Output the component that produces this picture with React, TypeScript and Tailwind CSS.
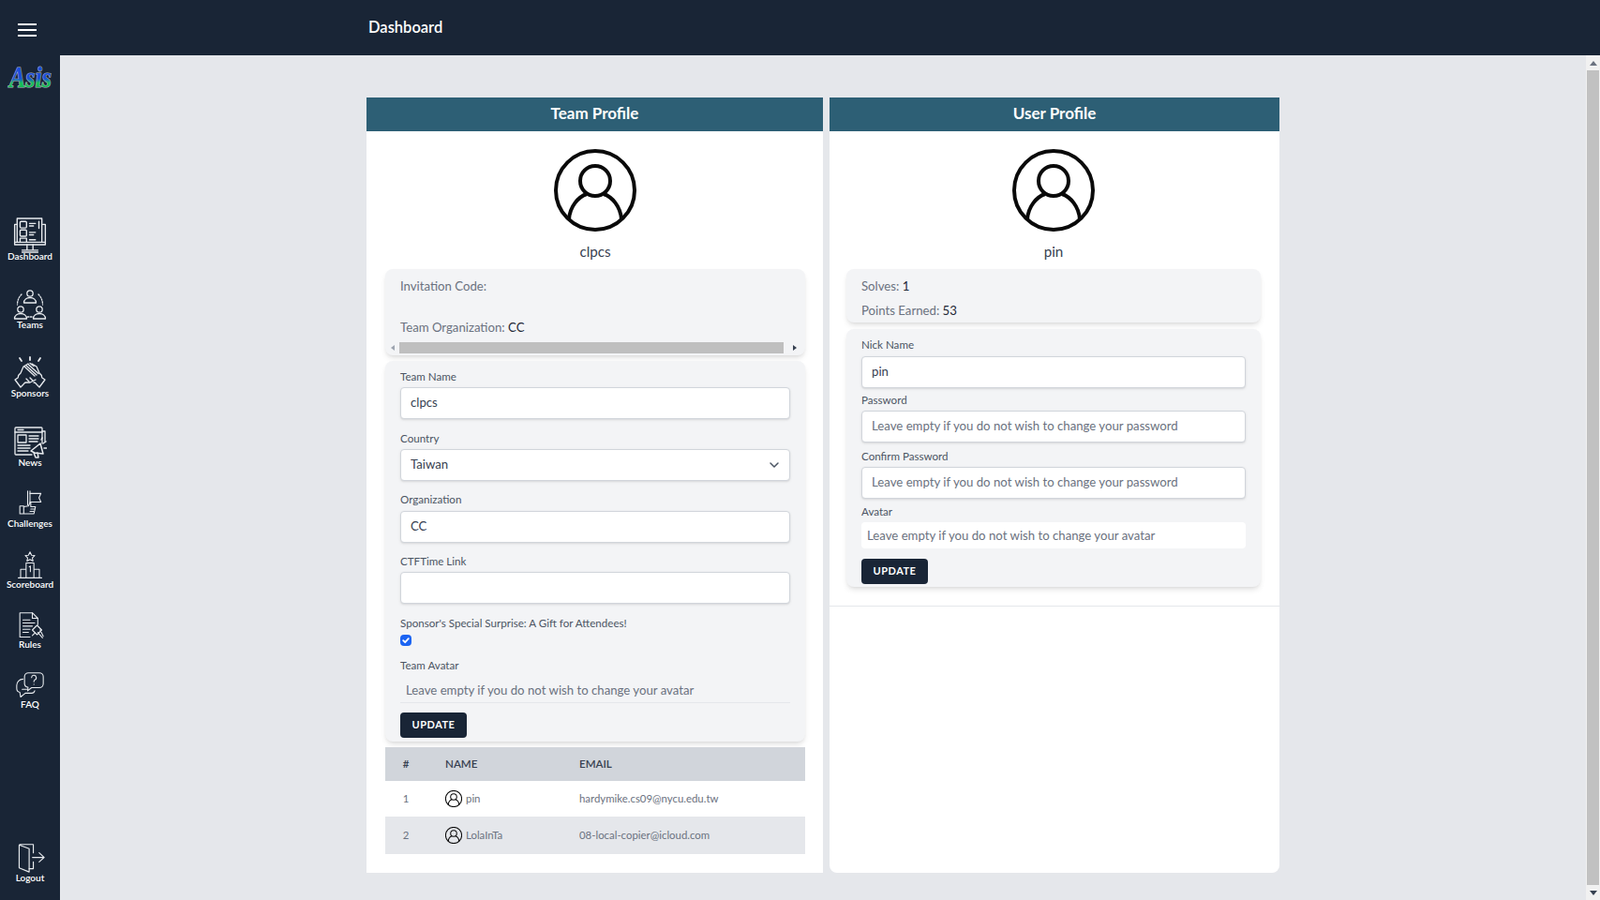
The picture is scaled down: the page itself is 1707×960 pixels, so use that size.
import React from 'react';

const font = "font-['Lato','Noto_Sans',sans-serif]";

function SvgIcon({ children, w = 36, h = 36 }: { children: React.ReactNode; w?: number; h?: number }) {
  return (
    <svg width={w} height={h} viewBox="0 0 36 36" fill="none" stroke="#e8ebef" strokeWidth="1.300" strokeLinecap="round" strokeLinejoin="round">
      {children}
    </svg>
  );
}

const DashboardIcon = () => (
  <SvgIcon w={38} h={38}>
    <path d="M5 7H2.500v20.500h31V7H31" />
    <path d="M2.500 25h31" />
    <path d="M5 25V1h25v24" />
    <rect x="8" y="4" width="6.500" height="6.500" rx="1" />
    <rect x="8" y="12.500" width="6.500" height="6.500" rx="1" />
    <path d="M8 25v-4h6.500v4" />
    <path d="M17.500 6h6M17.500 8.500h4M17.500 15h6M17.500 17.500h4M17.500 22.500h6M27 4v7" />
    <path d="M15 27.500v5M21 27.500v5M10 33h16M10 35h16" />
  </SvgIcon>
);

const TeamsIcon = () => (
  <SvgIcon w={36} h={36}>
    <circle cx="18" cy="6" r="3.200" />
    <path d="M11.500 16c0-3.500 3-5.500 6.500-5.500s6.500 2 6.500 5.500z" />
    <circle cx="8" cy="23" r="3.200" />
    <path d="M1.500 33c0-3.500 3-5.500 6.500-5.500s6.500 2 6.500 5.500z" />
    <circle cx="28" cy="23" r="3.200" />
    <path d="M21.500 33c0-3.500 3-5.500 6.500-5.500s6.500 2 6.500 5.500z" />
    <path d="M9 7c-2.500 2.500-4.500 6-4.500 11M27 7c2.500 2.500 4.500 6 4.500 11M15.500 31h5" strokeDasharray="1.500 1.500" />
  </SvgIcon>
);

const SponsorsIcon = () => (
  <SvgIcon w={38} h={36}>
    <path d="M18 1v3M7 2l2 3M29 2l-2 3" strokeWidth="1.800" />
    <path d="M16 8l-5 3-3 7-2 2c-1 1 0 2-1 3l-3 2 6 8 3-3c1-1 1-2 3-2h4l6-3" />
    <path d="M20 8l5 3 3 7 2 2c1 1 0 2 1 3l3 2-6 8-3-3c-1-1-1-2-3-2" />
    <path d="M12 11l11 10M14 10l11 10M16 8.500l11 10M18 7.500l4 3" />
    <path d="M14 24l3 3M18 23l3 3" />
  </SvgIcon>
);

const NewsIcon = () => (
  <SvgIcon w={36} h={36}>
    <path d="M31 19V3a1 1 0 0 0-1-1H3a1 1 0 0 0-1 1v27a1 1 0 0 0 1 1h17" />
    <path d="M2 7h29M5 4.500h6M34 17V6h-3" />
    <rect x="5" y="10" width="9" height="8" />
    <path d="M17 11h10M17 14h10M17 17h9M5 21h13M5 24h13M5 27h11" />
    <path d="M19 27l10-8 3 11-9 -1zM22 29l2 5h3l-1-5M32 19l3-2M33 24h3M30 15l1-2" strokeWidth="1.500" />
  </SvgIcon>
);

const ChallengesIcon = () => (
  <SvgIcon w={30} h={30}>
    <path d="M15 1v18M18 1v15" />
    <path d="M18 4h14l-2.500 5.500 2.500 5.500H18" />
    <path d="M5 20h5v10H5zM10 21l6-1 2-4h1v5h6l-2 9H10" />
    <path d="M19 24h5M18 27h5" />
  </SvgIcon>
);

const ScoreboardIcon = () => (
  <SvgIcon w={30} h={30}>
    <path d="M18 1l2 4 4 .5-3 3 .8 4-3.800-2-3.800 2 .8-4-3-3 4-.5z" />
    <path d="M13 34V15h10v19M6 34V23h7M23 23h7v11M3 34h30" />
    <path d="M17 20l1.500-1v7" />
  </SvgIcon>
);

const RulesIcon = () => (
  <SvgIcon w={30} h={30}>
    <path d="M18 33H5V2h16l7 7v8" />
    <path d="M21 2v7h7" />
    <path d="M9 11h9M9 15h15M9 19h12M9 23h9M9 27h7" />
    <path d="M21 24l6-6 6 6-6 6zM24 28l-3 3M28 27l6 7M31 24l4 8" />
  </SvgIcon>
);

const FaqIcon = () => (
  <SvgIcon w={30} h={30}>
    <path d="M16 2h14a5 5 0 0 1 5 5v9a5 5 0 0 1-5 5H20l-5 4 .5-4.500A5 5 0 0 1 11 16V7a5 5 0 0 1 5-5z" />
    <path d="M9 10a8 8 0 0 0-8 8v4a5 5 0 0 0 4 5l1 6 6-5h8a4 4 0 0 0 4-3" />
    <path d="M20 8a3 3 0 1 1 4 3c-1 .6-1 1-1 2.500M23 16.500v.3M8 23h6" />
  </SvgIcon>
);

const LogoutIcon = () => (
  <SvgIcon w={32} h={32}>
    <path d="M22 12V2H6L5 3v27l12 5V7L5 2.500" />
    <path d="M22 23v8h-5" />
    <path d="M21 17.500h14M29 12l6 5.500-6 5.500" />
  </SvgIcon>
);

const navItems = [
  { label: 'Dashboard', icon: <DashboardIcon />, gap: 'mt-[129px]', pull: '-mt-[3px]' },
  { label: 'Teams', icon: <TeamsIcon />, gap: 'mt-[28px]', pull: '-mt-[3px]' },
  { label: 'Sponsors', icon: <SponsorsIcon />, gap: 'mt-[28px]', pull: '-mt-[3px]' },
  { label: 'News', icon: <NewsIcon />, gap: 'mt-[29px]', pull: '-mt-[3px]' },
  { label: 'Challenges', icon: <ChallengesIcon />, gap: 'mt-[24px]' },
  { label: 'Scoreboard', icon: <ScoreboardIcon />, gap: 'mt-[24px]' },
  { label: 'Rules', icon: <RulesIcon />, gap: 'mt-[23px]' },
  { label: 'FAQ', icon: <FaqIcon />, gap: 'mt-[23px]' },
];

function NavItem({ label, icon, gap, pull }: { label: string; icon: React.ReactNode; gap?: string; pull?: string }) {
  return (
    <div className={`flex flex-col items-center ${gap ?? ''}`}>
      {icon}
      <span className={`text-[10px] leading-[12px] font-semibold text-white ${pull ?? '-mt-px'}`}>{label}</span>
    </div>
  );
}

function Sidebar() {
  return (
    <aside className="w-16 shrink-0 h-full bg-[#192536] flex flex-col items-center">
      <div className="h-[59px] w-full shrink-0 flex items-center pl-[19px] pt-1">
        <div className="w-5 flex flex-col gap-1">
          <span className="h-0.5 bg-white block" />
          <span className="h-0.5 bg-white block" />
          <span className="h-0.5 bg-white block" />
        </div>
      </div>
      {/* logo text stretched upright, the box leaves room round the glyphs */}
      <svg width="60" height="42" viewBox="0 0 60 42" className="mt-[2px] shrink-0">
        <defs>
          <linearGradient id="logoFill" x1="0" y1="0" x2="0" y2="1">
            <stop offset="0" stopColor="#1f4fe0" />
            <stop offset="0.55" stopColor="#1c4fd8" />
            <stop offset="0.68" stopColor="#19c25a" />
            <stop offset="1" stopColor="#12a84c" />
          </linearGradient>
        </defs>
        <text x="8" y="26" transform="scale(1 1.230)" fontFamily="'Liberation Serif', serif" fontStyle="italic" fontWeight="700" fontSize="26" fill="url(#logoFill)" stroke="#aab6c0" strokeWidth="1" paintOrder="stroke">Asis</text>
      </svg>
      {navItems.map((item) => (
        <NavItem key={item.label} {...item} />
      ))}
      <div className="mt-auto mb-[18px]">
        <NavItem label="Logout" icon={<LogoutIcon />} />
      </div>
    </aside>
  );
}

function Avatar({ size, stroke }: { size: number; stroke: number }) {
  return (
    <svg width={size} height={size} viewBox="0 0 88 88" fill="none" stroke="#0a0a0a" strokeWidth={stroke}>
      <circle cx="44" cy="44" r="42" />
      <circle cx="44" cy="34" r="16" />
      <path d="M16 75c1-14 10-24 19-27M72 75c-1-14-10-24-19-27" />
    </svg>
  );
}

function Label({ children }: { children: React.ReactNode }) {
  return <label className="block text-[11.600px] leading-[18px] text-[#4b5563]">{children}</label>;
}

function TextInput({ value, placeholder }: { value?: string; placeholder?: string }) {
  return (
    <input
      readOnly
      value={value ?? ''}
      placeholder={placeholder}
      className="w-full h-[34px] block bg-white border border-[#d1d5db] rounded-[4px] px-2.5 pb-[2px] text-[13.200px] text-[#374151] placeholder:text-[#6b7280] shadow-sm outline-none"
    />
  );
}

function UpdateButton() {
  return (
    <button className="w-[71px] h-[27px] bg-[#192536] text-white text-[11px] font-bold tracking-[0.5px] rounded-[4px]">
      UPDATE
    </button>
  );
}

function PanelHeader({ title }: { title: string }) {
  return (
    <div className="h-[36px] pb-[2px] bg-[#2d5f75] text-white font-bold text-[17px] flex items-center justify-center">{title}</div>
  );
}

function Stat({ label, value }: { label: string; value: string }) {
  return (
    <p className="text-[13.200px] leading-[20px] text-[#6b7280]">
      {label} <span className="text-[#1f2937]">{value}</span>
    </p>
  );
}

function ScrollTriangle({ d }: { d: string }) {
  return (
    <svg width="8" height="8" viewBox="0 0 8 8">
      <path d={d} fill="currentColor" />
    </svg>
  );
}

function TeamProfile() {
  return (
    <section className="w-[487px] bg-white">
      <PanelHeader title="Team Profile" />
      <div className="pl-5 pr-[19px] pt-[19px] pb-5">
        <div className="flex flex-col items-center">
          <Avatar size={88} stroke={4} />
          <p className="mt-[11px] text-[15.200px] leading-[20px] text-[#374151]">clpcs</p>
        </div>
        <div className="mt-[9px] h-[92px] bg-[#f3f4f6] rounded-lg shadow-md pt-2 flex flex-col">
          <div className="px-4 flex-1">
            <Stat label="Invitation Code:" value="" />
            <div className="mt-6">
              <Stat label="Team Organization:" value="CC" />
            </div>
          </div>
          <div className="h-[12px] mb-[2px] flex items-center">
            <div className="w-[15px] flex justify-center text-[#9ca3af]"><ScrollTriangle d="M6 1v6L2 4z" /></div>
            <div className="w-[410px] h-[12px] bg-[#bfbfbf]" />
            <div className="flex-1 flex justify-center text-[#374151]"><ScrollTriangle d="M2 1v6l4-3z" /></div>
          </div>
        </div>
        <div className="mt-1.5 h-[406px] bg-[#f3f4f6] rounded-lg shadow-md px-4 pt-2">
          <Label>Team Name</Label>
          <div className="mt-[2px]"><TextInput value="clpcs" /></div>
          <div className="mt-[12px]"><Label>Country</Label></div>
          <div className="mt-[2px] relative">
            <TextInput value="Taiwan" />
            <svg className="absolute right-[10px] top-[10px]" width="14" height="14" viewBox="0 0 14 14" fill="none" stroke="#4b5563" strokeWidth="1.500" strokeLinecap="round" strokeLinejoin="round">
              <path d="M3 5l4 4 4-4" />
            </svg>
          </div>
          <div className="mt-[11px]"><Label>Organization</Label></div>
          <div className="mt-[3px]"><TextInput value="CC" /></div>
          <div className="mt-[11px]"><Label>CTFTime Link</Label></div>
          <div className="mt-[2px]"><TextInput /></div>
          <div className="mt-[12px]"><Label>Sponsor's Special Surprise: A Gift for Attendees!</Label></div>
          <div className="mt-[3px] w-3 h-3 rounded-[4px] bg-[#1c64f2] flex items-center justify-center">
            <svg width="10" height="10" viewBox="0 0 10 10" fill="none" stroke="white" strokeWidth="1.800" strokeLinecap="round" strokeLinejoin="round">
              <path d="M2.200 5.200l2 2 3.600-4" />
            </svg>
          </div>
          <div className="mt-[12px]"><Label>Team Avatar</Label></div>
          <input
            readOnly
            placeholder="Leave empty if you do not wish to change your avatar"
            className="mt-[3px] w-full h-[28px] block bg-transparent border-b border-[#e5e7eb] px-1.5 text-[13.200px] placeholder:text-[#6b7280] outline-none"
          />
          <div className="mt-[9px]"><UpdateButton /></div>
        </div>
        <table className="mt-1.5 w-full table-fixed text-left">
          <thead className="bg-[#d1d5db]">
            <tr className="h-[36px] text-[11.600px] text-[#374151]">
              <th className="w-[64px] text-center pr-5 font-semibold">#</th>
              <th className="w-[143px] font-semibold">NAME</th>
              <th className="font-semibold">EMAIL</th>
            </tr>
          </thead>
          <tbody className="text-[11.400px] text-[#6b7280]">
            <tr className="h-[38px]">
              <td className="text-center pr-5">1</td>
              <td>
                <span className="flex items-center gap-1">
                  <Avatar size={18} stroke={5} />
                  pin
                </span>
              </td>
              <td>hardymike.cs09@nycu.edu.tw</td>
            </tr>
            <tr className="h-[40px] bg-[#e5e7eb]">
              <td className="text-center pr-5">2</td>
              <td>
                <span className="flex items-center gap-1">
                  <Avatar size={18} stroke={5} />
                  LolaInTa
                </span>
              </td>
              <td>08-local-copier@icloud.com</td>
            </tr>
          </tbody>
        </table>
      </div>
    </section>
  );
}

function UserProfile() {
  return (
    <section className="w-[480px] bg-white rounded-b-lg">
      <PanelHeader title="User Profile" />
      <div className="pl-[18px] pr-[20px] pt-[19px] pb-5 border-b border-[#e5e7eb]">
        <div className="flex flex-col items-center">
          <Avatar size={88} stroke={4} />
          <p className="mt-[11px] text-[15.200px] leading-[20px] text-[#374151]">pin</p>
        </div>
        <div className="mt-[9px] h-[57px] bg-[#f3f4f6] rounded-lg shadow-md px-4 pt-2 flex flex-col gap-[6px]">
          <Stat label="Solves:" value="1" />
          <Stat label="Points Earned:" value="53" />
        </div>
        <div className="mt-[7px] h-[275px] bg-[#f3f4f6] rounded-lg shadow-md px-4 pt-2">
          <Label>Nick Name</Label>
          <div className="mt-[3px]"><TextInput value="pin" /></div>
          <div className="mt-[4px]"><Label>Password</Label></div>
          <div className="mt-[2px]"><TextInput placeholder="Leave empty if you do not wish to change your password" /></div>
          <div className="mt-[6px]"><Label>Confirm Password</Label></div>
          <div className="mt-[2px]"><TextInput placeholder="Leave empty if you do not wish to change your password" /></div>
          <div className="mt-[5px]"><Label>Avatar</Label></div>
          <input
            readOnly
            placeholder="Leave empty if you do not wish to change your avatar"
            className="mt-[2px] w-full h-[28px] block bg-white rounded-[4px] px-1.5 text-[13.200px] placeholder:text-[#6b7280] outline-none"
          />
          <div className="mt-[10px]"><UpdateButton /></div>
        </div>
      </div>
    </section>
  );
}

export default function App() {
  return (
    <div className={`h-[960px] flex overflow-hidden bg-[#e5e7eb] ${font}`}>
      <Sidebar />
      <div className="flex-1 flex flex-col min-w-0">
        <header className="h-[59px] shrink-0 bg-[#192536] flex items-center pl-[329px] text-white text-[16.500px] font-semibold">
          Dashboard
        </header>
        <div className="flex-1 flex min-h-0">
          <main className="flex-1 pl-[327px] pt-[45px] flex items-start gap-[7px]">
            <TeamProfile />
            <div className="self-stretch mb-[29px] flex"><UserProfile /></div>
          </main>
          <div className="w-[15px] bg-[#f1f1f1] flex flex-col items-center">
            <div className="h-4 flex items-center text-[#6b7280]"><ScrollTriangle d="M4 2l4 5H0z" /></div>
            <div className="w-full flex-1 px-[1px]"><div className="h-full bg-[#c1c1c1]" /></div>
            <div className="h-4 flex items-center text-[#374151]"><ScrollTriangle d="M0 2h8L4 7z" /></div>
          </div>
        </div>
      </div>
    </div>
  );
}
